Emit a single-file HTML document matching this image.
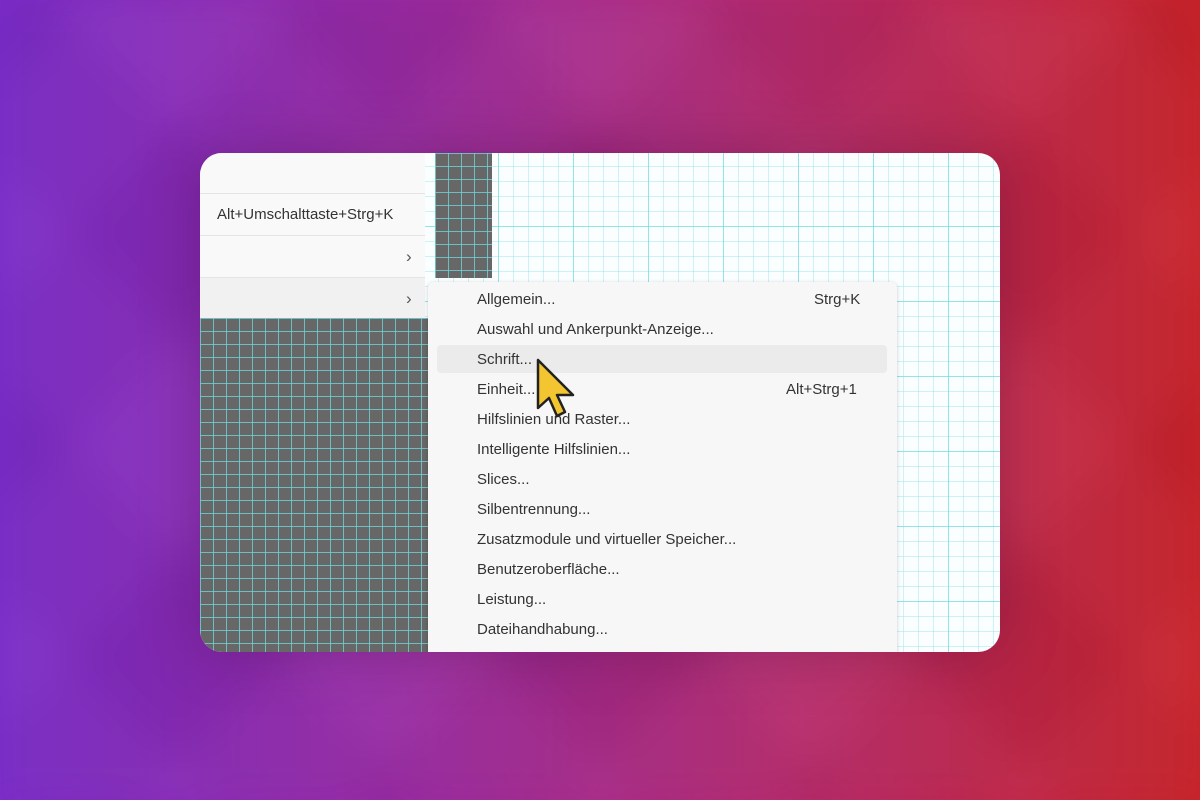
<!DOCTYPE html><html><head><style>
body{margin:0;width:1200px;height:800px;overflow:hidden;background:linear-gradient(90deg,#7a2cc8 0%,#9a2aa0 35%,#b52a6e 65%,#c8232a 100%);font-family:"Liberation Sans",sans-serif;position:relative}
.pat{position:absolute;inset:0;background:repeating-linear-gradient(45deg,rgba(255,255,255,.025) 0 150px,rgba(0,0,0,.025) 150px 300px),repeating-linear-gradient(-45deg,rgba(255,255,255,.025) 0 150px,rgba(0,0,0,.025) 150px 300px);filter:blur(20px)}
.card{position:absolute;left:200px;top:153px;width:800px;height:499px;border-radius:22px;overflow:hidden;background-color:#fbfefe;box-shadow:0 0 60px rgba(40,0,40,.25);
background-image:linear-gradient(90deg,rgba(100,215,225,.55) 1px,transparent 1px),linear-gradient(rgba(100,215,225,.55) 1px,transparent 1px),linear-gradient(90deg,rgba(120,220,230,.35) 1px,transparent 1px),linear-gradient(rgba(120,220,230,.35) 1px,transparent 1px);
background-size:75px 75px,75px 75px,15px 15px,15px 15px;background-position:-2px -2px}
.dark{position:absolute;background-color:#676767;background-image:linear-gradient(90deg,rgba(110,210,215,.8) 1px,transparent 1px),linear-gradient(rgba(110,210,215,.8) 1px,transparent 1px);background-size:13px 13px}
.t{position:absolute;font-size:15px;color:#333;white-space:nowrap}
.sep{position:absolute;left:0;width:225px;height:1px;background:#e4e4e4}
</style></head><body><div class="pat"></div>
<div class="card">
<div class="dark" style="left:235px;top:0;width:57px;height:125px"></div>
<div class="dark" style="left:0;top:165px;width:230px;height:340px"></div>
<div style="position:absolute;left:0;top:0;width:225px;height:165px;background:#f9f9f9"></div>
<div style="position:absolute;left:0;top:125px;width:225px;height:40px;background:#f1f1f1"></div>
<div class="sep" style="top:40px"></div><div class="sep" style="top:82px"></div><div class="sep" style="top:124px"></div>
<div class="t" style="left:17px;top:53px">Alt+Umschalttaste+Strg+K</div>
<div class="t" style="left:206px;top:94px;font-size:17px;color:#555">›</div>
<div class="t" style="left:206px;top:136px;font-size:17px;color:#555">›</div>
<div style="position:absolute;left:228px;top:129px;width:469px;height:380px;background:#f7f7f7;border-radius:6px;box-shadow:0 1px 4px rgba(0,0,0,.2)"></div>
<div style="position:absolute;left:237px;top:192px;width:450px;height:28px;background:#ebebeb;border-radius:4px"></div>
<div class="t" style="left:277px;top:138px">Allgemein...</div><div class="t" style="left:614px;top:138px">Strg+K</div>
<div class="t" style="left:277px;top:168px">Auswahl und Ankerpunkt-Anzeige...</div>
<div class="t" style="left:277px;top:198px">Schrift...</div>
<div class="t" style="left:277px;top:228px">Einheit...</div><div class="t" style="left:586px;top:228px">Alt+Strg+1</div>
<div class="t" style="left:277px;top:258px">Hilfslinien und Raster...</div>
<div class="t" style="left:277px;top:288px">Intelligente Hilfslinien...</div>
<div class="t" style="left:277px;top:318px">Slices...</div>
<div class="t" style="left:277px;top:348px">Silbentrennung...</div>
<div class="t" style="left:277px;top:378px">Zusatzmodule und virtueller Speicher...</div>
<div class="t" style="left:277px;top:408px">Benutzeroberfläche...</div>
<div class="t" style="left:277px;top:438px">Leistung...</div>
<div class="t" style="left:277px;top:468px">Dateihandhabung...</div>
<div class="t" style="left:277px;top:498px">Zwischenablage...</div>
<svg style="position:absolute;left:335px;top:205px" width="45" height="62" viewBox="0 0 45 62"><path d="M3 2 L3 50 L14 40 L22 58 L30 54 L22 37 L38 37 Z" fill="#f2c531" stroke="#222" stroke-width="2.5" stroke-linejoin="round"/></svg>
</div></body></html>
